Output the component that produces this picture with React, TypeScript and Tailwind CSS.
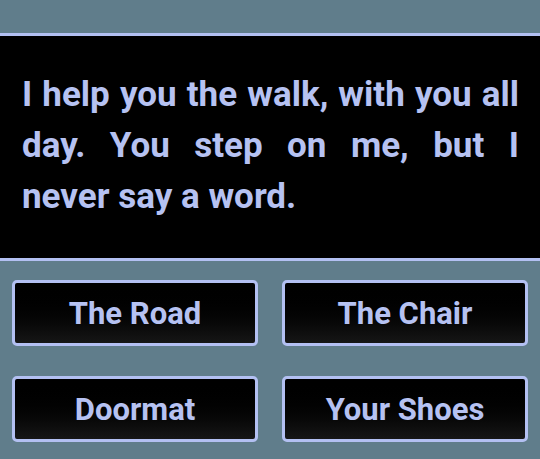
import React from "react";

const answers = ["The Road", "The Chair", "Doormat", "Your Shoes"];

export default function App() {
  return (
    <div
      className="min-h-screen w-full bg-[#607d8b] pt-[33px]"
      style={{ fontFamily: "Roboto, 'Liberation Sans', sans-serif" }}
    >
      {/* Riddle panel */}
      <div className="bg-black border-y-[3px] border-[#b3c0f2] pl-[22px] pr-[21px] pt-[33px] pb-[36px]">
        <p className="text-[35px] leading-[51px] font-bold text-[#b6c2f2] text-justify">
          I help you the walk, with you all day. You step on me, but I never say a word.
        </p>
      </div>

      {/* Answer buttons */}
      <div className="grid grid-cols-2 gap-x-[24px] gap-y-[30px] px-[12px] pt-[19px]">
        {answers.map((a) => (
          <button
            key={a}
            className="h-[66px] pt-[3px] rounded-[5px] border-[3px] border-[#b3c0f2] bg-gradient-to-b from-black to-[#161616] text-[31px] font-bold text-[#b6c2f2]"
          >
            {a}
          </button>
        ))}
      </div>
    </div>
  );
}
